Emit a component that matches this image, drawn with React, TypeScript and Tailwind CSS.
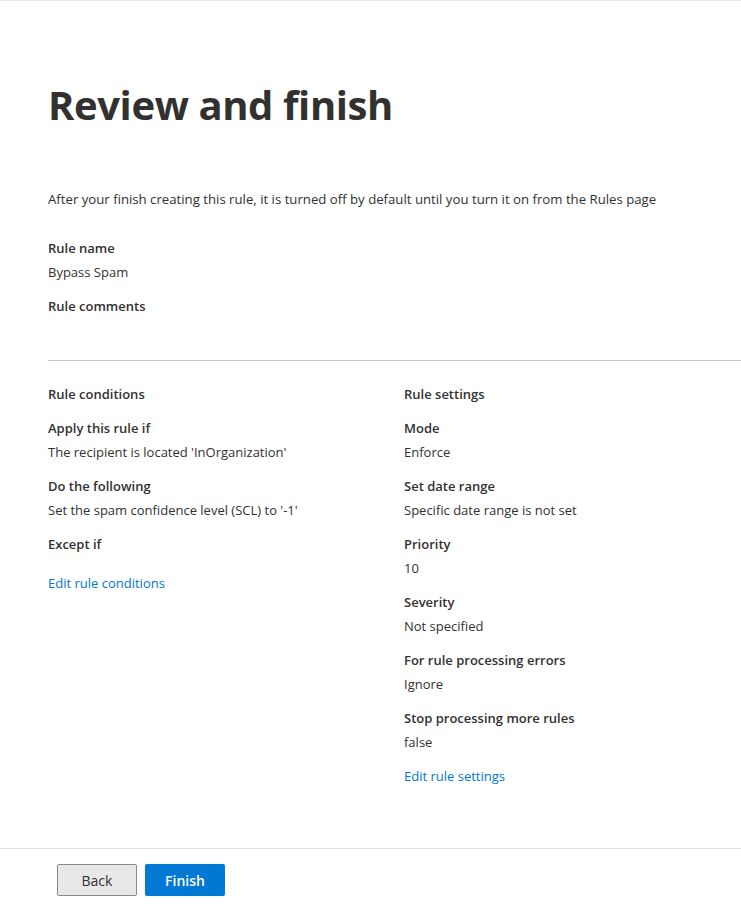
import React from 'react';

const font = { fontFamily: '"Open Sans", "Noto Sans", "Liberation Sans", sans-serif' };

interface FieldProps {
    label: string;
    value?: string;
}

function Field({ label, value }: FieldProps) {
    return (
        <div className="flex flex-col">
            <div className="text-[13px] leading-[20px] font-semibold text-[#323130]">{label}</div>
            {value !== undefined && (
                <div className="mt-[4px] text-[13px] leading-[20px] text-[#323130]">{value}</div>
            )}
        </div>
    );
}

export default function App() {
    return (
        <div style={font} className="w-full h-[904px] bg-white flex flex-col border-t border-[#e5e5e5] overflow-hidden">
            <div className="flex-1 pl-[48px]">
                <h1 className="mt-[76px] text-[40px] leading-[56px] font-bold text-[#323130] tracking-[-0.4px]">Review and finish</h1>

                <p className="mt-[56px] text-[13.2px] leading-[20px] text-[#323130]">
                    After your finish creating this rule, it is turned off by default until you turn it on from the Rules page
                </p>

                <div className="mt-[29px] flex flex-col gap-[14px]">
                    <Field label="Rule name" value="Bypass Spam" />
                    <Field label="Rule comments" />
                </div>

                <div className="mt-[44px] border-t border-[#c8c6c4]" />

                <div className="mt-[23px] flex">
                    <div className="w-[356px] flex flex-col gap-[14px]">
                        <Field label="Rule conditions" />
                        <Field label="Apply this rule if" value="The recipient is located 'InOrganization'" />
                        <Field label="Do the following" value="Set the spam confidence level (SCL) to '-1'" />
                        <Field label="Except if" />
                        <a className="mt-[5px] text-[13px] leading-[20px] text-[#0078d4]">Edit rule conditions</a>
                    </div>
                    <div className="flex flex-col gap-[14px]">
                        <Field label="Rule settings" />
                        <Field label="Mode" value="Enforce" />
                        <Field label="Set date range" value="Specific date range is not set" />
                        <Field label="Priority" value="10" />
                        <Field label="Severity" value="Not specified" />
                        <Field label="For rule processing errors" value="Ignore" />
                        <Field label="Stop processing more rules" value="false" />
                        <a className="text-[13px] leading-[20px] text-[#0078d4]">Edit rule settings</a>
                    </div>
                </div>
            </div>

            <div className="h-[56px] border-t border-[#e1dfdd] pl-[57px] pt-[15px] flex gap-[8px]">
                <button type="button" className="w-[80px] h-[32px] rounded-[2px] border border-[#8a8886] bg-[#e8e8e8] text-[14px] text-[#323130]">
                    Back
                </button>
                <button type="button" className="w-[80px] h-[32px] rounded-[2px] bg-[#0078d4] text-[14px] font-semibold text-white">
                    Finish
                </button>
            </div>
        </div>
    );
}
